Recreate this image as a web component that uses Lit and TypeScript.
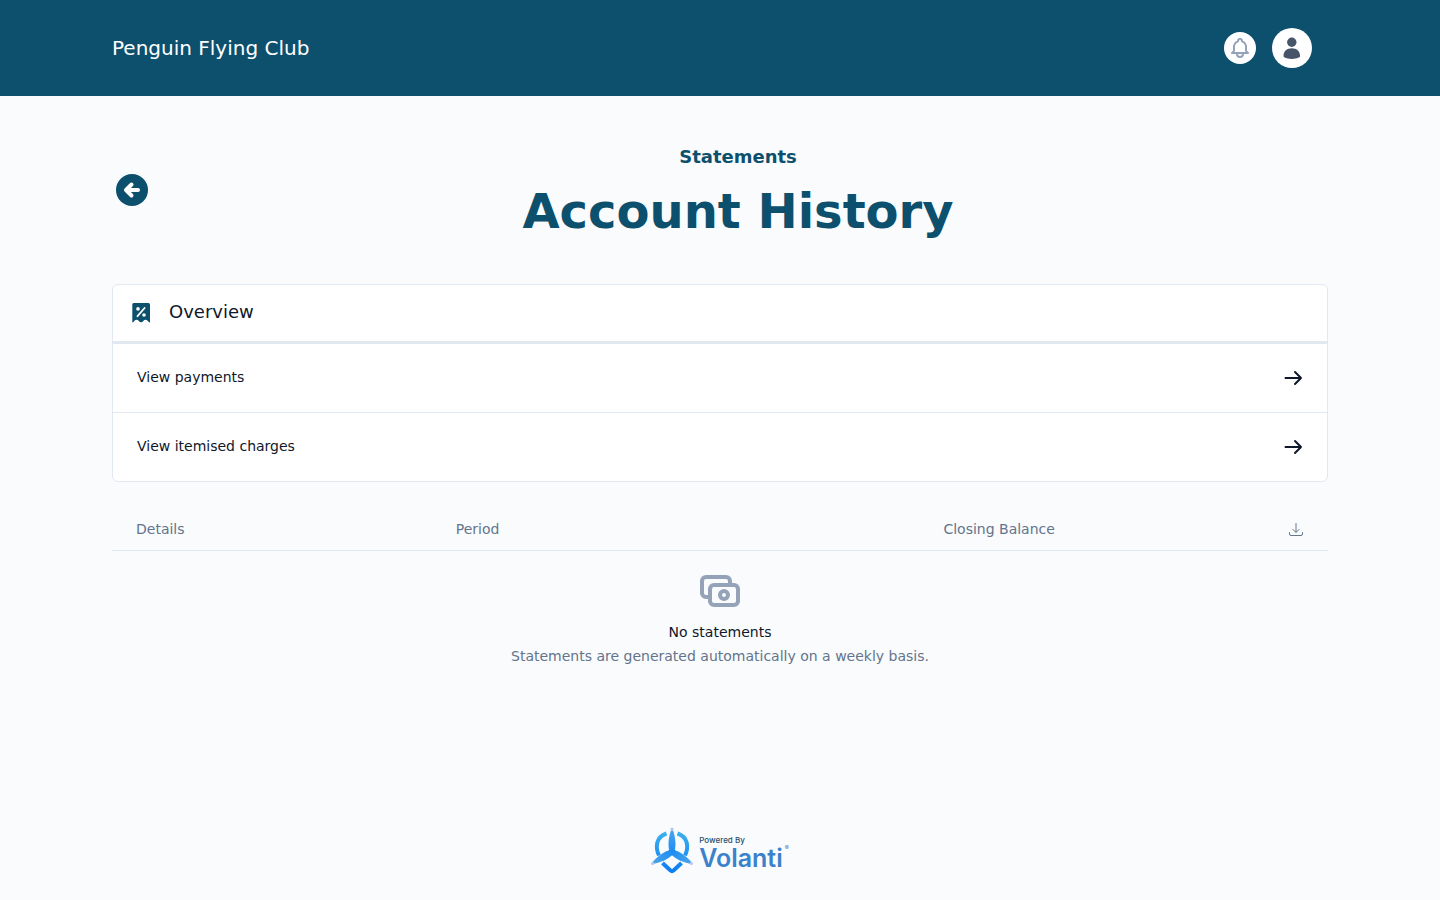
import { LitElement, html, css, svg } from "lit";
import { customElement } from "lit/decorators.js";

const arrowRight = html`<svg class="arrow" viewBox="0 0 24 24" fill="none" stroke="currentColor" stroke-width="2" stroke-linecap="round" stroke-linejoin="round" aria-hidden="true"><path d="M4.500 12H20M14 6l6 6-6 6"/></svg>`;

const blade = svg`<path d="M0 4C-4.600-2-4.300-11-1.200-21.500h2.400C4.300-11 4.600-2 0 4z"/>`;

@customElement("app-header")
class AppHeader extends LitElement {
  static styles = css`
    :host { display: block; background: #0d506d; color: #fff; }
    .bar { box-sizing: border-box; max-width: 1280px; margin: 0 auto; padding: 28px 48px 28px 32px; display: flex; align-items: center; gap: 16px; }
    .club { flex: 1; font-size: 20px; line-height: 28px; }
    .club a { color: inherit; text-decoration: none; }
    button { padding: 0; border: 0; border-radius: 50%; background: #fff; display: grid; place-items: center; cursor: pointer; }
    .bell { width: 32px; height: 32px; color: #94a3b8; }
    .user { width: 40px; height: 40px; color: #475569; }
    svg { width: 24px; height: 24px; display: block; }
  `;
  render() {
    return html`<header class="bar">
      <div class="club"><a href="#">Penguin Flying Club</a></div>
      <button class="bell" aria-label="Notifications">
        <svg viewBox="0 0 24 24" fill="none" stroke="currentColor" stroke-width="2" stroke-linecap="round" stroke-linejoin="round"><path d="M15 17h5l-1.405-1.405A2.032 2.032 0 0118 14.158V11a6.002 6.002 0 00-4-5.659V5a2 2 0 10-4 0v.341C7.670 6.165 6 8.388 6 11v3.159c0 .538-.214 1.055-.595 1.436L4 17h5m6 0v1a3 3 0 11-6 0v-1m6 0H9"/></svg>
      </button>
      <button class="user" aria-label="Account menu">
        <svg viewBox="0 0 24 24" fill="currentColor"><circle cx="11.800" cy="6.200" r="4.700"/><path d="M3.500 20c0-5 3.700-7.700 8.300-7.700s8.300 2.700 8.300 7.700c0 .6-.2 1-.7 1.300-4.500 2.300-10.700 2.300-15.200 0-.5-.3-.7-.7-.7-1.300z"/></svg>
      </button>
    </header>`;
  }
}

@customElement("overview-card")
class OverviewCard extends LitElement {
  static styles = css`
    :host { display: block; background: #fff; border: 1px solid #e2e8f0; border-radius: 6px; color: #0f172a; overflow: hidden; }
    .head { display: flex; align-items: center; gap: 16px; padding: 13px 16px; border-bottom: 3px solid #e2e8f0; }
    .head svg { width: 24px; height: 24px; color: #0d506d; }
    h3 { margin: 0; padding-bottom: 2px; font-size: 18px; line-height: 28px; font-weight: 400; }
    ul { margin: 0; padding: 0; list-style: none; }
    li + li { border-top: 1px solid #e2e8f0; }
    a { display: flex; align-items: center; justify-content: space-between; padding: 22px; padding-left: 24px; font-size: 14px; line-height: 20px; color: inherit; text-decoration: none; }
    a span { padding-bottom: 2px; }
    .arrow { width: 24px; height: 24px; display: block; }
  `;
  render() {
    return html`
      <div class="head">
        <svg viewBox="0 0 24 24" fill="currentColor" aria-hidden="true">
          <path d="M5 2h14.500A1.500 1.500 0 0 1 21 3.500v18q-1.400-.3-2.200-1.500a2.700 2.700 0 0 0-4.500 0q-.9 1.300-2.200 1.300T9.800 20a2.700 2.700 0 0 0-4.500 0Q4.600 21.200 3.300 21.500v-18A1.500 1.500 0 0 1 5 2z"/>
          <g fill="#fff"><circle cx="9" cy="7.900" r="1.800"/><circle cx="15" cy="14" r="1.800"/></g>
          <path d="M8.500 15.200 15.600 7" stroke="#fff" stroke-width="1.800" stroke-linecap="round"/>
        </svg>
        <h3>Overview</h3>
      </div>
      <ul>
        ${["View payments", "View itemised charges"].map((t) => html`<li><a href="#"><span>${t}</span>${arrowRight}</a></li>`)}
      </ul>`;
  }
}

@customElement("statement-list")
class StatementList extends LitElement {
  static styles = css`
    :host { display: block; font-size: 14px; line-height: 20px; color: #64748b; }
    table { width: 100%; table-layout: fixed; border-collapse: collapse; border-bottom: 1px solid #e2e8f0; }
    th { box-sizing: border-box; padding: 13px 24px 11px; font-weight: 400; text-align: left; }
    .details { width: 26.300%; }
    .period { width: 40.100%; }
    .download { width: 64px; padding-left: 0; }
    th svg { width: 16px; height: 16px; display: block; margin-left: auto; }
    .empty { padding-top: 16px; text-align: center; }
    .empty svg { width: 48px; height: 48px; display: block; margin: 0 auto; color: #94a3b8; }
    h3 { margin: 7px 0 4px; font-size: 14px; line-height: 20px; font-weight: 400; color: #0f172a; }
    p { margin: 0; }
  `;
  render() {
    return html`
      <table>
        <thead><tr>
          <th class="details">Details</th>
          <th class="period">Period</th>
          <th>Closing Balance</th>
          <th class="download" aria-label="Download">
            <svg viewBox="0 0 16 16" fill="none" stroke="currentColor" stroke-linecap="round" stroke-linejoin="round" aria-hidden="true"><path d="M8 2.500v8.500M5 8.500l3 3 3-3M1.500 11.500v1.500a1.500 1.500 0 0 0 1.500 1.500h10a1.500 1.500 0 0 0 1.500-1.500v-1.500"/></svg>
          </th>
        </tr></thead>
      </table>
      <div class="empty">
        <svg viewBox="0 0 24 24" fill="none" stroke="currentColor" stroke-width="2" stroke-linecap="round" stroke-linejoin="round" aria-hidden="true"><path d="M17 9V7a2 2 0 00-2-2H5a2 2 0 00-2 2v6a2 2 0 002 2h2m2 4h10a2 2 0 002-2v-6a2 2 0 00-2-2H9a2 2 0 00-2 2v6a2 2 0 002 2zm7-5a2 2 0 11-4 0 2 2 0 014 0z"/></svg>
        <h3>No statements</h3>
        <p>Statements are generated automatically on a weekly basis.</p>
      </div>`;
  }
}

@customElement("powered-by")
class PoweredBy extends LitElement {
  static styles = css`
    :host { display: flex; justify-content: center; gap: 6px; font-family: Inter, "Liberation Sans", sans-serif; }
    .mark { width: 42px; height: 48px; display: block; }
    .words { display: grid; padding-top: 8px; align-content: start; }
    .small { font-size: 8px; line-height: 10px; font-weight: 500; color: #27506f; }
    .name { font-size: 25px; line-height: 26px; font-weight: 600; color: #3b82cb; display: flex; gap: 2px; }
    .reg { font-size: 6px; line-height: 6px; font-weight: 400; }
  `;
  render() {
    return html`
      <svg class="mark" viewBox="0 0 42 48" aria-hidden="true">
        <defs><linearGradient id="g" gradientUnits="userSpaceOnUse" x1="0" y1="0" x2="0" y2="48"><stop offset="0" stop-color="#43b7ec"/><stop offset="1" stop-color="#087af5"/></linearGradient>
        <linearGradient id="b" x1="0" y1="0" x2="0" y2="1"><stop offset="0" stop-color="#4aa5ec"/><stop offset="1" stop-color="#1689f4"/></linearGradient></defs>
        <g fill="none" stroke="url(#g)" stroke-width="4">
          <path d="M15.500 6.500C5 10 4 20 8 28.500M26.500 6.500C37 10 38 20 34 28.500"/>
          <path d="M11.500 36 19.500 43.500q1.500 1.200 3 0l8-7.500"/>
        </g>
        <g fill="url(#b)">
          <g transform="translate(21 25)">${blade}</g>
          <g transform="translate(21 25) rotate(120)">${blade}</g>
          <g transform="translate(21 25) rotate(240)">${blade}</g>
        </g>
        <g fill="#b4c6ef"><circle cx="21" cy="2" r="1.600"/><circle cx="1.600" cy="36.500" r="1.600"/><circle cx="40.400" cy="36.500" r="1.600"/></g>
      </svg>
      <div class="words">
        <span class="small">Powered By</span>
        <span class="name">Volanti<span class="reg">®</span></span>
      </div>`;
  }
}

@customElement("app-root")
class AppRoot extends LitElement {
  static styles = css`
    :host { display: flex; flex-direction: column; min-height: 100vh; background: #f9fbfd; font-family: "DejaVu Sans", sans-serif; }
    main { box-sizing: border-box; width: 100%; max-width: 1280px; margin: 0 auto; padding: 47px 32px 0; flex: 1; }
    .title { display: flex; align-items: center; padding-left: 4px; color: #0d506d; }
    .back { width: 32px; height: 32px; display: block; color: inherit; }
    .back svg { width: 32px; height: 32px; display: block; }
    hgroup { flex: 1; text-align: center; }
    .kicker { margin: 0 0 14px; font-size: 18px; line-height: 28px; font-weight: 700; }
    h1 { margin: 0; font-size: 48px; line-height: 52px; font-weight: 700; }
    overview-card { margin-top: 47px; }
    statement-list { margin-top: 24px; }
    footer { padding-bottom: 25px; }
  `;
  render() {
    return html`
      <app-header></app-header>
      <main>
        <div class="title">
          <a class="back" href="#" aria-label="Back">
            <svg viewBox="0 0 32 32" fill="none" stroke="#fff" stroke-width="4" stroke-linecap="round" stroke-linejoin="round"><circle cx="16" cy="16" r="16" fill="#0d506d" stroke="none"/><path d="M22 16H10.500M15.500 10.500 10 16l5.500 5.500"/></svg>
          </a>
          <hgroup>
            <p class="kicker">Statements</p>
            <h1>Account History</h1>
          </hgroup>
        </div>
        <overview-card></overview-card>
        <statement-list></statement-list>
      </main>
      <footer><powered-by></powered-by></footer>`;
  }
}
